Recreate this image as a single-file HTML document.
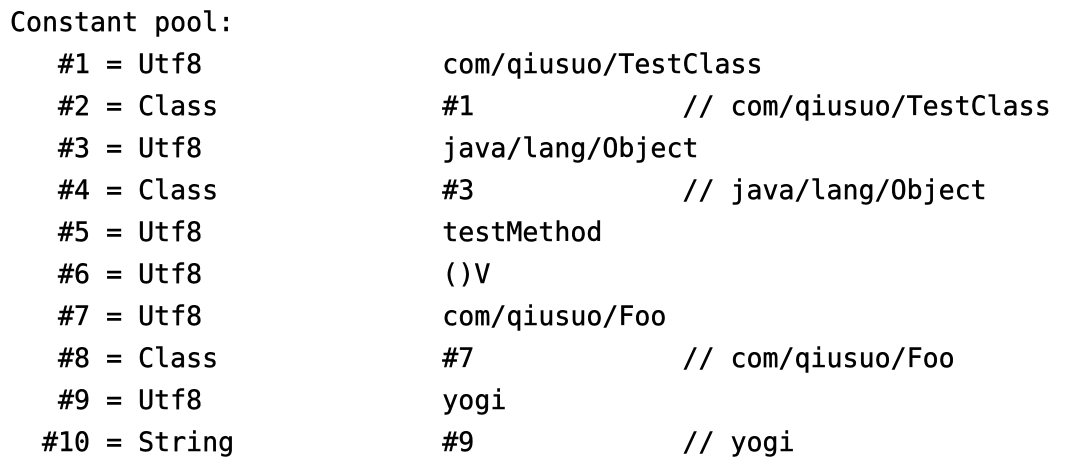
<!DOCTYPE html>
<html><head><meta charset="utf-8"><style>
html,body{margin:0;padding:0;background:#fff;width:1076px;height:472px;overflow:hidden}
pre{margin:0;position:absolute;left:10px;top:2px;font-family:"DejaVu Sans Mono","Liberation Mono",monospace;font-size:26.6px;line-height:42px;color:#000;font-weight:normal;-webkit-text-stroke:0.4px #000}
</style></head><body><pre>Constant pool:
   #1 = Utf8               com/qiusuo/TestClass
   #2 = Class              #1             // com/qiusuo/TestClass
   #3 = Utf8               java/lang/Object
   #4 = Class              #3             // java/lang/Object
   #5 = Utf8               testMethod
   #6 = Utf8               ()V
   #7 = Utf8               com/qiusuo/Foo
   #8 = Class              #7             // com/qiusuo/Foo
   #9 = Utf8               yogi
  #10 = String             #9             // yogi</pre></body></html>
